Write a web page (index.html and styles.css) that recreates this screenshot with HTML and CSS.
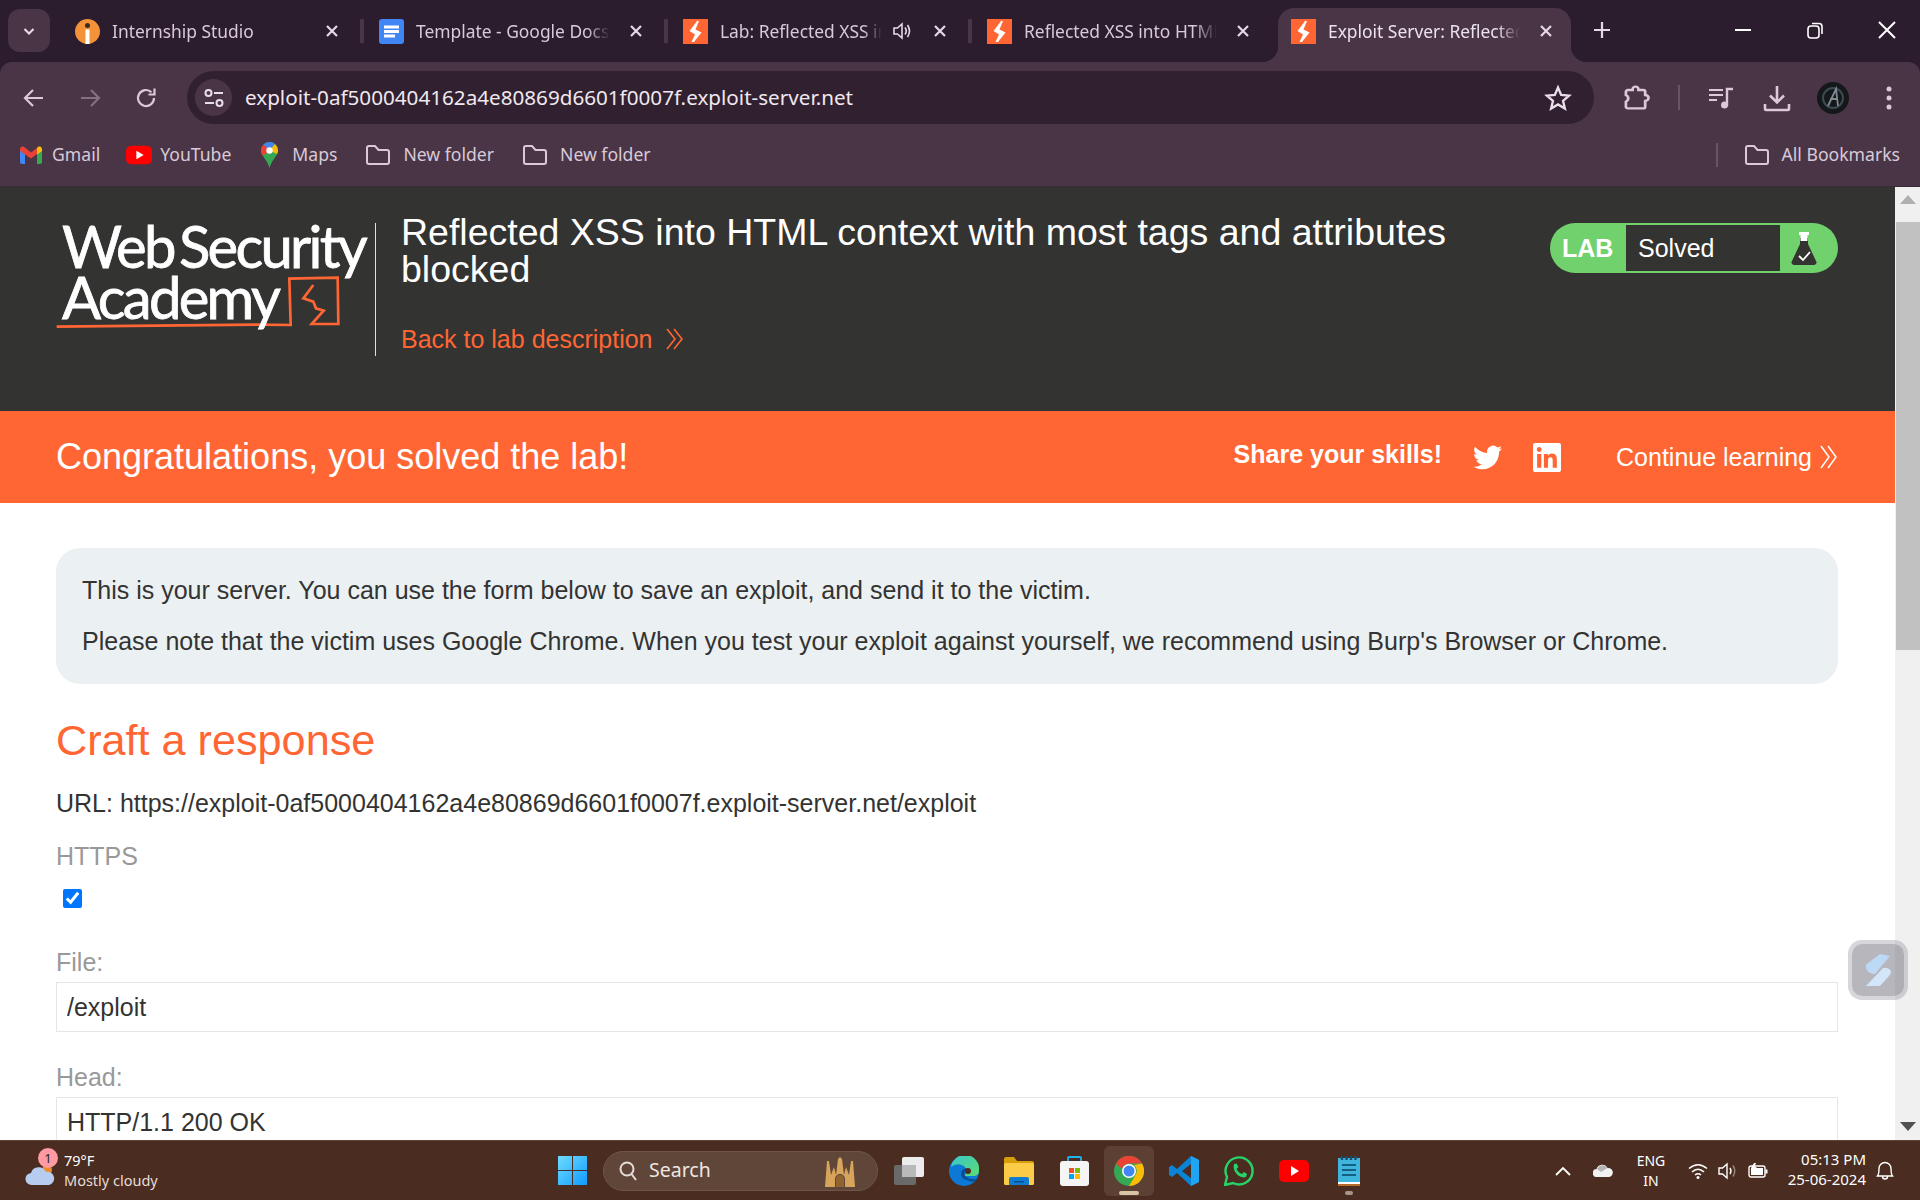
FILE: index.html
```html
<!DOCTYPE html>
<html lang="en">
<head>
    <meta charset="UTF-8">
    <meta name="viewport" content="width=device-width, initial-scale=1.0">
    <title>Exploit Server: Reflected XSS into HTML context with most tags and attributes blocked</title>
    <link rel="stylesheet" href="styles.css">
</head>
<body>
    <svg class="defs" width="0" height="0">
        <symbol id="burp" viewBox="0 0 25 25">
            <rect width="25" height="25" fill="#ff6633"/>
            <path d="M14 2 L6.500 12 L12 15.500 L8.500 23 L11 23 L18.500 13.500 L12.500 10.500 L16 2 Z" fill="#fff"/>
        </symbol>
        <symbol id="folder" viewBox="0 0 26 22">
            <path d="M2 4 a2 2 0 0 1 2 -2 h6 l3.500 4 H22 a2 2 0 0 1 2 2 v10 a2 2 0 0 1 -2 2 H4 a2 2 0 0 1 -2 -2 Z" fill="none" stroke="#dcc8d8" stroke-width="2"/>
        </symbol>
        <symbol id="close" viewBox="0 0 16 16">
            <path d="M3 3 L13 13 M13 3 L3 13" stroke="#e6d8e4" stroke-width="2.200" fill="none"/>
        </symbol>
    </svg>

    <div class="window-top">
        <div class="tabstrip">
            <div class="tab-menu">
                <svg width="14" height="14" viewBox="0 0 14 14"><path d="M2.500 5 L7 9.500 L11.500 5" fill="none" stroke="#eadfe8" stroke-width="2"/></svg>
            </div>
            <div class="tab">
                <svg class="favicon" viewBox="0 0 25 25">
                    <circle cx="12.500" cy="12.500" r="12.500" fill="#f39237"/>
                    <rect x="10.500" y="10.500" width="4" height="14.500" fill="#fff"/>
                    <circle cx="12.500" cy="6.500" r="2.500" fill="#3a2a20"/>
                </svg>
                <span class="tab-title">Internship Studio</span>
                <svg class="tab-close"><use href="#close"/></svg>
                <span class="tab-sep"></span>
            </div>
            <div class="tab">
                <svg class="favicon" viewBox="0 0 25 25">
                    <rect width="25" height="25" rx="3" fill="#4285f4"/>
                    <path d="M5 6.500 H20 V9.500 H5 Z M5 11 H20 V14 H5 Z M5 15.500 H16 V18.500 H5 Z" fill="#fff"/>
                </svg>
                <span class="tab-title">Template - Google Docs</span>
                <svg class="tab-close"><use href="#close"/></svg>
                <span class="tab-sep"></span>
            </div>
            <div class="tab">
                <svg class="favicon"><use href="#burp"/></svg>
                <span class="tab-title">Lab: Reflected XSS into HTML</span>
                <svg class="tab-sound" viewBox="0 0 20 20">
                    <path d="M2 7 H5.500 L10 3 V17 L5.500 13 H2 Z" fill="none" stroke="#e6d8e4" stroke-width="1.600"/>
                    <path d="M13 6.500 Q15.500 10 13 13.500 M15.500 4 Q19.500 10 15.500 16" fill="none" stroke="#e6d8e4" stroke-width="1.600"/>
                </svg>
                <svg class="tab-close"><use href="#close"/></svg>
                <span class="tab-sep"></span>
            </div>
            <div class="tab last-plain-tab">
                <svg class="favicon"><use href="#burp"/></svg>
                <span class="tab-title">Reflected XSS into HTML context</span>
                <svg class="tab-close"><use href="#close"/></svg>
            </div>
            <div class="tab active-tab">
                <svg class="favicon"><use href="#burp"/></svg>
                <span class="tab-title">Exploit Server: Reflected XSS</span>
                <svg class="tab-close"><use href="#close"/></svg>
            </div>
            <svg class="new-tab" viewBox="0 0 18 18"><path d="M9 1 V17 M1 9 H17" stroke="#e6d8e4" stroke-width="2.200"/></svg>
            <div class="window-controls">
                <svg class="win-btn" viewBox="0 0 20 20"><path d="M2 10 H18" stroke="#fff" stroke-width="2"/></svg>
                <svg class="win-btn" viewBox="0 0 20 20"><rect x="3" y="6" width="11" height="12" rx="3" fill="none" stroke="#fff" stroke-width="1.600"/><path d="M7 3.500 H14 a3 3 0 0 1 3 3 V14" fill="none" stroke="#fff" stroke-width="1.600"/></svg>
                <svg class="win-btn" viewBox="0 0 20 20"><path d="M2 2 L18 18 M18 2 L2 18" stroke="#fff" stroke-width="2"/></svg>
            </div>
        </div>

        <div class="toolbar">
            <div class="tool-btn">
                <svg width="24" height="24" viewBox="0 0 24 24"><path d="M21 12 H4 M11 4 L3 12 L11 20" fill="none" stroke="#dcc8d8" stroke-width="2.200"/></svg>
            </div>
            <div class="tool-btn">
                <svg width="24" height="24" viewBox="0 0 24 24"><path d="M3 12 H20 M13 4 L21 12 L13 20" fill="none" stroke="#85707f" stroke-width="2.200"/></svg>
            </div>
            <div class="tool-btn">
                <svg width="24" height="24" viewBox="0 0 24 24"><path d="M20 12 A8 8 0 1 1 17.500 6.200" fill="none" stroke="#dcc8d8" stroke-width="2.200"/><path d="M20.500 2.500 V8.500 H14.500" fill="none" stroke="#dcc8d8" stroke-width="2.200"/></svg>
            </div>
            <div class="omnibox">
                <div class="site-info">
                    <svg width="22" height="22" viewBox="0 0 22 22">
                        <circle cx="5.500" cy="6" r="3" fill="none" stroke="#eadfe8" stroke-width="2"/>
                        <path d="M11 6 H20 M2 16 H11" stroke="#eadfe8" stroke-width="2"/>
                        <circle cx="16.500" cy="16" r="3" fill="none" stroke="#eadfe8" stroke-width="2"/>
                    </svg>
                </div>
                <span class="url">exploit-0af5000404162a4e80869d6601f0007f.exploit-server.net</span>
                <svg class="star" width="28" height="28" viewBox="0 0 24 24"><path d="M12 3 L14.700 9.300 L21.500 9.900 L16.300 14.400 L17.900 21 L12 17.500 L6.100 21 L7.700 14.400 L2.500 9.900 L9.300 9.300 Z" fill="none" stroke="#eadfe8" stroke-width="2"/></svg>
            </div>
            <div class="tool-btn">
                <svg width="27" height="25" viewBox="0 0 28 30" preserveAspectRatio="none"><path d="M5 6 H10 V5 a3 3 0 0 1 6 0 V6 H21 a2 2 0 0 1 2 2 V12 a3.500 3.500 0 0 1 0 7 V26 a2 2 0 0 1 -2 2 H5 a2 2 0 0 1 -2 -2 V20 a4.500 4.500 0 0 0 0 -8 V8 a2 2 0 0 1 2 -2 Z" fill="none" stroke="#dcc8d8" stroke-width="2.800"/></svg>
            </div>
            <span class="tool-sep"></span>
            <div class="tool-btn">
                <svg width="26" height="24" viewBox="0 0 26 24"><path d="M1 4 H15 M1 9 H15 M1 14 H9" stroke="#dcc8d8" stroke-width="2.200"/><path d="M19 20 V3 H25" fill="none" stroke="#dcc8d8" stroke-width="2.400"/><circle cx="16.500" cy="19" r="3.500" fill="#dcc8d8"/></svg>
            </div>
            <div class="tool-btn">
                <svg width="28" height="28" viewBox="0 0 28 28"><path d="M14 2 V18 M7 11.500 L14 18.500 L21 11.500 M2 20 V25 a1 1 0 0 0 1 1 H25 a1 1 0 0 0 1 -1 V20" fill="none" stroke="#dcc8d8" stroke-width="2.600"/></svg>
            </div>
            <div class="tool-btn">
                <svg width="32" height="32" viewBox="0 0 32 32">
                    <circle cx="16" cy="16" r="16" fill="#15181a"/>
                    <circle cx="16" cy="16" r="10" fill="none" stroke="#3c4a52" stroke-width="2"/>
                    <path d="M11 24 L19 7 L21 24 M13 17 H21" fill="none" stroke="#7d8a94" stroke-width="1.800"/>
                </svg>
            </div>
            <div class="tool-btn">
                <svg width="8" height="28" viewBox="0 0 8 28"><circle cx="4" cy="5" r="2.500" fill="#dcc8d8"/><circle cx="4" cy="14" r="2.500" fill="#dcc8d8"/><circle cx="4" cy="23" r="2.500" fill="#dcc8d8"/></svg>
            </div>
        </div>

        <div class="bookmarks">
            <div class="bookmark">
                <svg class="bm-icon gmail-icon" viewBox="0 0 22 18">
                    <path d="M0 5 H5 V18 H2 a2 2 0 0 1 -2 -2 Z" fill="#4285f4"/>
                    <path d="M17 5 H22 V16 a2 2 0 0 1 -2 2 H17 Z" fill="#34a853"/>
                    <path d="M0 3.500 Q0 0 3.500 .5 L11 6.500 L17 2 V8 L11 12.500 L0 5 Z" fill="#ea4335"/>
                    <path d="M17 2 L18.500 .5 Q22 0 22 3.500 V5 L17 8.500 Z" fill="#fbbc04"/>
                </svg>
                <span>Gmail</span>
            </div>
            <div class="bookmark youtube-mark">
                <svg class="bm-icon" viewBox="0 0 25 18">
                    <rect width="25" height="18" rx="5" fill="#f00"/>
                    <path d="M10 5 L17 9 L10 13 Z" fill="#fff"/>
                </svg>
                <span>YouTube</span>
            </div>
            <div class="bookmark">
                <svg class="bm-icon maps-icon" viewBox="0 0 17 26">
                    <path d="M8.500 0 A8.500 8.500 0 0 1 17 8.500 C17 14 11 17 8.500 26 C6 17 0 14 0 8.500 A8.500 8.500 0 0 1 8.500 0 Z" fill="#34a853"/>
                    <path d="M2.500 2.500 A8.500 8.500 0 0 1 14 2 L8.500 8.500 Z" fill="#4285f4"/>
                    <path d="M0 8.500 A8.500 8.500 0 0 1 2.500 2.500 L8.500 8.500 L2 14 Q0 11 0 8.500 Z" fill="#ea4335"/>
                    <path d="M14 2 A8.500 8.500 0 0 1 17 8.500 Q17 10 16 12 L8.500 8.500 Z" fill="#fbbc04"/>
                    <circle cx="8.500" cy="8.500" r="3.200" fill="#fff"/>
                </svg>
                <span>Maps</span>
            </div>
            <div class="bookmark folder-mark">
                <svg class="bm-icon"><use href="#folder"/></svg>
                <span>New folder</span>
            </div>
            <div class="bookmark folder-mark">
                <svg class="bm-icon"><use href="#folder"/></svg>
                <span>New folder</span>
            </div>
            <span class="bm-sep"></span>
            <div class="bookmark folder-mark all-marks">
                <svg class="bm-icon"><use href="#folder"/></svg>
                <span>All Bookmarks</span>
            </div>
        </div>
    </div>

    <div class="viewport">
        <div class="page">
            <header class="lab-header">
                <div class="logo">
                    <svg class="logo-mark" viewBox="0 0 1200 510">
                        <path d="M50 380 L650 374 L752 375 L748 236 L893 233 L895 372 L815 372 L851 332 L828 325 L820 305 L790 295 L820 255" fill="none" stroke="#ff6633" stroke-width="8"/>
                    </svg>
                    <div class="logo-text">Web Security<br>Academy</div>
                </div>
                <div class="lab-title">
                    <h2>Reflected XSS into HTML context with most tags and attributes blocked</h2>
                    <a class="back-link" href="#">Back to lab description
                        <svg width="18" height="22" viewBox="0 0 18 22"><path d="M1 1 L9 11 L1 21 M8 1 L16 11 L8 21" fill="none" stroke="#ff6633" stroke-width="1.600"/></svg>
                    </a>
                </div>
                <div class="lab-status">
                    <span class="lab-label">LAB</span>
                    <span class="lab-state">Solved</span>
                    <svg class="flask" width="26" height="33" viewBox="0 0 26 33">
                        <path d="M9 6 H17 V12 L25 29 a2.500 2.500 0 0 1 -2 4 H3 a2.500 2.500 0 0 1 -2 -4 L9 12 Z" fill="#333332"/>
                        <path d="M8 0 H18 V3 H16.500 V9 H9.500 V3 H8 Z" fill="#fff"/>
                        <path d="M8 24 L12 28 L19 20" fill="none" stroke="#fff" stroke-width="1.800"/>
                    </svg>
                </div>
            </header>

            <div class="solved-bar">
                <span class="congrats">Congratulations, you solved the lab!</span>
                <span class="share">Share your skills!</span>
                <svg class="twitter" viewBox="0 0 24 24"><path fill="#fff" d="M23.953 4.570a10 10 0 01-2.825.775 4.958 4.958 0 002.163-2.723c-.951.555-2.005.959-3.127 1.184a4.920 4.920 0 00-8.384 4.482C7.690 8.095 4.067 6.130 1.640 3.162a4.822 4.822 0 00-.666 2.475c0 1.710.870 3.213 2.188 4.096a4.904 4.904 0 01-2.228-.616v.060a4.923 4.923 0 003.946 4.827 4.996 4.996 0 01-2.212.085 4.936 4.936 0 004.604 3.417 9.867 9.867 0 01-6.102 2.105c-.390 0-.779-.023-1.170-.067a13.995 13.995 0 007.557 2.209c9.053 0 13.998-7.496 13.998-13.985 0-.210 0-.420-.015-.630A9.935 9.935 0 0024 4.590z"/></svg>
                <svg class="linkedin" viewBox="0 0 24 24" preserveAspectRatio="none"><path fill="#fff" d="M20.447 20.452h-3.554v-5.569c0-1.328-.027-3.037-1.852-3.037-1.853 0-2.136 1.445-2.136 2.939v5.667H9.351V9h3.414v1.561h.046c.477-.9 1.637-1.850 3.370-1.850 3.601 0 4.267 2.370 4.267 5.455v6.286zM5.337 7.433c-1.144 0-2.063-.926-2.063-2.065 0-1.138.920-2.063 2.063-2.063 1.140 0 2.064.925 2.064 2.063 0 1.139-.925 2.065-2.064 2.065zm1.782 13.019H3.555V9h3.564v11.452zM22.225 0H1.771C.792 0 0 .774 0 1.729v20.542C0 23.227.792 24 1.771 24h20.451C23.200 24 24 23.227 24 22.271V1.729C24 .774 23.200 0 22.222 0h.003z"/></svg>
                <a class="continue" href="#">Continue learning
                    <svg width="18" height="24" viewBox="0 0 18 24"><path d="M1 1 L9 12 L1 23 M8 1 L16 12 L8 23" fill="none" stroke="#fff" stroke-width="1.500"/></svg>
                </a>
            </div>

            <section class="content">
                <div class="info-box">
                    <p>This is your server. You can use the form below to save an exploit, and send it to the victim.</p>
                    <p>Please note that the victim uses Google Chrome. When you test your exploit against yourself, we recommend using Burp's Browser or Chrome.</p>
                </div>
                <h3>Craft a response</h3>
                <p class="exploit-url">URL: https://exploit-0af5000404162a4e80869d6601f0007f.exploit-server.net/exploit</p>
                <label class="field-label https-label">HTTPS</label>
                <input class="https-check" type="checkbox" checked>
                <label class="field-label file-label">File:</label>
                <input class="text-input" type="text" value="/exploit">
                <label class="field-label head-label">Head:</label>
                <textarea class="text-input head-input" rows="5">HTTP/1.1 200 OK</textarea>
            </section>

            <div class="float-widget">
                <svg width="32" height="40" viewBox="14 9 32 40">
                    <path d="M18 27 Q17 24 20 22 L32 13 L42 15 L27 33 Q20 33 18 27 Z" fill="#bcd9f6"/>
                    <path d="M18 45 L35 27 Q40 26 43 30 Q43 33 41 35 L32 45 Z" fill="#d3e5f8"/>
                </svg>
            </div>
        </div>

        <div class="scrollbar">
            <svg class="scroll-arrow" viewBox="0 0 16 9"><path d="M8 0 L16 9 H0 Z" fill="#b0b0b0"/></svg>
            <div class="scroll-thumb"></div>
            <svg class="scroll-arrow arrow-down" viewBox="0 0 16 9"><path d="M0 0 H16 L8 9 Z" fill="#505050"/></svg>
        </div>
    </div>

    <footer class="taskbar">
        <div class="weather">
            <div class="weather-icon">
                <svg width="30" height="22" viewBox="0 0 30 22">
                    <circle cx="22" cy="6" r="5" fill="#f08a2c"/>
                    <path d="M7 21 a6 6 0 0 1 -1 -12 a8 8 0 0 1 15 -1 a6.500 6.500 0 0 1 3 13 Z" fill="#b6cdf0"/>
                </svg>
                <span class="weather-badge">1</span>
            </div>
            <div class="weather-text">
                <span class="temp">79°F</span>
                <span class="sky">Mostly cloudy</span>
            </div>
        </div>

        <div class="task-center">
            <svg class="start" width="29" height="29" viewBox="0 0 29 29">
                <defs><linearGradient id="winblue" x1="0" y1="0" x2="1" y2="1"><stop offset="0" stop-color="#6fdcff"/><stop offset="1" stop-color="#0f9bff"/></linearGradient></defs>
                <path d="M0 0 H14 V14 H0 Z M15 0 H29 V14 H15 Z M0 15 H14 V29 H0 Z M15 15 H29 V29 H15 Z" fill="url(#winblue)"/>
            </svg>
            <div class="search-pill">
                <svg width="18" height="20" viewBox="0 0 18 20"><circle cx="8" cy="8" r="6.500" fill="none" stroke="#e6dcd6" stroke-width="2"/><path d="M12.500 13 L17 19" stroke="#e6dcd6" stroke-width="2"/></svg>
                <span>Search</span>
                <svg class="search-art" width="38" height="32" viewBox="0 0 38 32">
                    <path d="M4 32 L6 6 L8 6 L10 20 L13 12 L15 20 L17 4 L19 2 L21 4 L23 20 L25 12 L28 20 L30 6 L32 6 L34 32 H24 V24 A5 5 0 0 0 14 24 V32 Z" fill="#d6a55b"/>
                    <path d="M15 32 V24 A4 4 0 0 1 23 24 V32 Z" fill="#8f6430"/>
                </svg>
            </div>
            <div class="task-item">
                <svg width="30" height="28" viewBox="0 0 30 28">
                    <rect x="0" y="8" width="22" height="20" rx="2" fill="#6a6a6a"/>
                    <rect x="8" y="0" width="22" height="20" rx="2" fill="#ececec"/>
                    <rect x="8" y="8" width="14" height="12" fill="#b9b9b9"/>
                </svg>
            </div>
            <div class="task-item">
                <svg width="30" height="30" viewBox="0 0 30 30">
                    <defs><linearGradient id="edgeg" x1="0" y1="0" x2="1" y2="1"><stop offset="0" stop-color="#37c6d0"/><stop offset="1" stop-color="#5fdc6e"/></linearGradient></defs>
                    <circle cx="15" cy="15" r="15" fill="#0d79d6"/>
                    <path d="M2 11 A14 14 0 0 1 30 15 Q30 20 24 20 H15 Q20 15 15 10 Q8 6 2 11 Z" fill="url(#edgeg)"/>
                    <path d="M18 12 A6 6 0 1 0 18 24 Q24 28 28 23 Q20 24 16 20 Q14 16 18 12 Z" fill="#0a4e96"/>
                    <circle cx="19" cy="15" r="3" fill="#4a2c20"/>
                </svg>
            </div>
            <div class="task-item">
                <svg width="30" height="28" viewBox="0 0 30 28">
                    <path d="M0 2 a2 2 0 0 1 2 -2 H10 L13 4 H28 a2 2 0 0 1 2 2 V10 H0 Z" fill="#d79e0a"/>
                    <rect x="0" y="6" width="30" height="22" rx="1.500" fill="#fccc48"/>
                    <path d="M5 28 V22 a2 2 0 0 1 2 -2 H23 a2 2 0 0 1 2 2 V28 Z" fill="#0f7cd0"/>
                    <rect x="10" y="24" width="10" height="1.500" fill="#0a4e96"/>
                </svg>
            </div>
            <div class="task-item">
                <svg width="29" height="30" viewBox="0 0 29 30">
                    <path d="M8 7 V2 a1 1 0 0 1 1 -1 H20 a1 1 0 0 1 1 1 V7" fill="none" stroke="#22b3ee" stroke-width="1.800"/>
                    <rect x="0" y="5" width="29" height="25" rx="3" fill="#f5f5f5"/>
                    <rect x="9" y="12" width="5" height="5" fill="#f25022"/>
                    <rect x="15" y="12" width="5" height="5" fill="#7fba00"/>
                    <rect x="9" y="18" width="5" height="5" fill="#00a4ef"/>
                    <rect x="15" y="18" width="5" height="5" fill="#ffb900"/>
                </svg>
            </div>
            <div class="task-item task-active">
                <svg width="30" height="30" viewBox="0 0 30 30">
                    <circle cx="15" cy="15" r="15" fill="#34a853"/>
                    <path d="M2 7.500 A15 15 0 0 1 28 7.500 H15 A7.500 7.500 0 0 0 8 13 Z" fill="#ea4335"/>
                    <path d="M28 7.500 A15 15 0 0 1 15 30 L21.500 19 A7.500 7.500 0 0 0 20 9 Z" fill="#fbbc04"/>
                    <circle cx="15" cy="15" r="7" fill="#fff"/>
                    <circle cx="15" cy="15" r="5.500" fill="#4285f4"/>
                </svg>
                <span class="active-line"></span>
            </div>
            <div class="task-item">
                <svg width="30" height="30" viewBox="0 0 30 30">
                    <path d="M22 0 L30 4 V26 L22 30 L8 17 L3 21 L0 19 V11 L3 9 L8 13 Z M22 8 L13 15 L22 22 Z" fill="#0a84d6"/>
                    <path d="M22 0 L30 4 V26 L22 30 Z" fill="#22a5f1"/>
                </svg>
            </div>
            <div class="task-item">
                <svg width="30" height="30" viewBox="0 0 30 30">
                    <path d="M1 29 L3 21 A13.500 13.500 0 1 1 9 27 Z" fill="none" stroke="#25d366" stroke-width="2.400"/>
                    <path d="M10 8 L12.500 7.500 L14.500 11 L12.500 13 Q14.500 17 18 18 L20 16 L23 18 L22 21 Q18 22.500 13.500 19 Q8.500 14 10 8 Z" fill="#25d366"/>
                </svg>
            </div>
            <div class="task-item">
                <svg width="30" height="22" viewBox="0 0 30 22"><rect width="30" height="22" rx="5" fill="#f00"/><path d="M12 6 L20 11 L12 16 Z" fill="#fff"/></svg>
            </div>
            <div class="task-item">
                <svg width="22" height="30" viewBox="0 0 22 30">
                    <rect x="0" y="2" width="22" height="26" fill="#3fb4dc"/>
                    <rect x="0" y="26" width="22" height="2" fill="#fff"/>
                    <rect x="0" y="28" width="22" height="2" fill="#b86a2c"/>
                    <path d="M4 0 V4 M8.500 0 V4 M13 0 V4 M17.500 0 V4" stroke="#14506e" stroke-width="2.400"/>
                    <path d="M4 9 H18 M4 14 H18 M4 19 H18" stroke="#14607f" stroke-width="2.200"/>
                </svg>
                <span class="open-dot"></span>
            </div>
        </div>

        <div class="tray">
            <svg class="tray-chevron" width="20" height="12" viewBox="0 0 20 12"><path d="M3 10 L10 3 L17 10" fill="none" stroke="#fff" stroke-width="1.800"/></svg>
            <svg class="tray-cloud" width="20" height="13" viewBox="0 0 20 13"><path d="M4 13 a4 4 0 0 1 -.5 -8 a6 6 0 0 1 11 -1 a4.500 4.500 0 0 1 1.500 9 Z" fill="#f2f2f2"/><path d="M4 5 a6 6 0 0 1 10.500 -1 L8 8 Z" fill="#b5b5b5"/></svg>
            <div class="tray-lang"><span>ENG</span><span>IN</span></div>
            <svg class="tray-wifi" width="20" height="16" viewBox="0 0 20 16"><path d="M1 5.500 Q10 -2 19 5.500 M4 9 Q10 3.500 16 9 M7 12 Q10 9.500 13 12" fill="none" stroke="#fff" stroke-width="1.600"/><circle cx="10" cy="14.500" r="1.500" fill="#fff"/></svg>
            <svg class="tray-icon" width="20" height="18" viewBox="0 0 20 18"><path d="M1 6 H4.500 L9 2 V16 L4.500 12 H1 Z" fill="none" stroke="#fff" stroke-width="1.400"/><path d="M12 6 Q14 9 12 12" fill="none" stroke="#fff" stroke-width="1.400"/><path d="M15 3.500 Q18.500 9 15 14.500" fill="none" stroke="#9c8a80" stroke-width="1.400"/></svg>
            <svg class="tray-icon" width="20" height="16" viewBox="0 0 20 16"><rect x="1" y="3" width="16" height="11" rx="2" fill="none" stroke="#fff" stroke-width="1.400"/><rect x="3" y="5" width="12" height="7" fill="#fff"/><rect x="17.500" y="6.500" width="2" height="4" fill="#fff"/><path d="M6 0 L3 5 H6 L4 8 L9 4 H6.500 L8 0 Z" fill="#fff"/></svg>
            <div class="tray-clock"><span>05:13 PM</span><span>25-06-2024</span></div>
            <svg class="tray-bell" width="18" height="20" viewBox="0 0 18 20"><path d="M1.500 15 Q3 13 3 7.500 a6 6 0 0 1 12 0 Q15 13 16.500 15 Z M6.500 15.500 a2.500 2.500 0 0 0 5 0" fill="none" stroke="#fff" stroke-width="1.400"/></svg>
        </div>
    </footer>
</body>
</html>
```

FILE: styles.css
```css
* {
    box-sizing: border-box;
}

body {
    margin: 0;
    height: 100vh;
    display: flex;
    flex-direction: column;
    overflow: hidden;
    font-family: "Liberation Sans", Arial, sans-serif;
    color: #333332;
    background-color: white;
}

.defs {
    position: absolute;
}

/* browser chrome */
.window-top {
    background-color: #2c1d2e;
    font-family: "Noto Sans", sans-serif;
    flex: none;
}

.tabstrip {
    height: 62px;
    display: flex;
    align-items: flex-start;
    padding-left: 8px;
}

.tab-menu {
    width: 42px;
    height: 43px;
    margin: 9px 12px 0 0;
    background-color: #4a3547;
    border-radius: 12px;
    display: flex;
    align-items: center;
    justify-content: center;
}

.tab {
    width: 304px;
    height: 62px;
    display: flex;
    align-items: center;
    padding: 0 2px 0 13px;
    color: #d9cad8;
    font-size: 17.400px;
}

.favicon {
    width: 25px;
    height: 25px;
    flex: none;
}

.tab-title {
    flex: 1;
    min-width: 0;
    margin: 0 18px 1px 12px;
    white-space: nowrap;
    overflow: hidden;
    -webkit-mask-image: linear-gradient(to right, black 88%, transparent 100%);
    mask-image: linear-gradient(to right, black 88%, transparent 100%);
}

.tab-close {
    width: 16px;
    height: 16px;
    flex: none;
}

.tab-sound {
    width: 20px;
    height: 20px;
    flex: none;
    margin: 0 20px 0 -8px;
}

.tab-sep {
    width: 4px;
    height: 24px;
    margin-left: 20px;
    background-color: #4a3547;
    flex: none;
}

.last-plain-tab {
    padding-right: 27px;
}

.active-tab {
    position: relative;
    width: 293px;
    height: 54px;
    margin-top: 8px;
    padding: 0 17px 8px 13px;
    background-color: #4a3547;
    border-radius: 16px 16px 0 0;
    color: #ece2ea;
}

.active-tab::before,
.active-tab::after {
    content: "";
    position: absolute;
    bottom: 0;
    width: 16px;
    height: 16px;
}

.active-tab::before {
    right: 100%;
    background: radial-gradient(circle at 0 0, #2c1d2e 16px, #4a3547 16.500px);
}

.active-tab::after {
    left: 100%;
    background: radial-gradient(circle at 100% 0, #2c1d2e 16px, #4a3547 16.500px);
}

.new-tab {
    width: 18px;
    height: 18px;
    margin: 21px 0 0 22px;
}

.window-controls {
    margin-left: auto;
    padding: 20px 23px 0 0;
    display: flex;
    gap: 52px;
}

.win-btn {
    width: 20px;
    height: 20px;
}

.toolbar {
    height: 62px;
    padding: 9px 3px 0 6px;
    background-color: #4a3547;
    border-radius: 12px 12px 0 0;
    display: flex;
    align-items: center;
}

.tool-btn {
    width: 56px;
    height: 53px;
    flex: none;
    display: flex;
    align-items: center;
    justify-content: center;
}

.omnibox {
    width: 1407px;
    height: 53px;
    margin: 0 14px 0 13px;
    background-color: #302030;
    border-radius: 27px;
    display: flex;
    align-items: center;
    padding: 0 22px 0 8px;
}

.site-info {
    width: 37px;
    height: 37px;
    border-radius: 50%;
    background-color: #4a3547;
    display: flex;
    align-items: center;
    justify-content: center;
}

.url {
    margin: 0 0 2px 13px;
    color: #f0e8ee;
    font-size: 20.650px;
}

.star {
    margin-left: auto;
}

.tool-sep {
    width: 2px;
    height: 25px;
    margin: 0 13px 0 14px;
    background-color: #6a5365;
    flex: none;
}

.bookmarks {
    height: 63px;
    padding: 0 20px;
    background-color: #4a3547;
    border-bottom: 1px solid #3a2a38;
    display: flex;
    align-items: center;
    gap: 26px;
    color: #d9cad8;
    font-size: 17.600px;
}

.bookmark {
    display: flex;
    align-items: center;
    gap: 10px;
}

.bookmark span {
    margin-bottom: 2px;
}

.youtube-mark {
    gap: 8px;
}

.folder-mark {
    gap: 12px;
    margin-left: 2px;
}

.all-marks {
    margin-left: 0;
}

.bm-icon {
    width: 26px;
    height: 22px;
    flex: none;
}

.gmail-icon {
    width: 22px;
    height: 18px;
}

.maps-icon {
    width: 17px;
    height: 26px;
    margin: 0 4px;
}

.bm-sep {
    width: 2px;
    height: 24px;
    margin-left: auto;
    background-color: #6a5365;
}

/* lab page */
.viewport {
    flex: 1;
    min-height: 0;
    display: flex;
}

.page {
    position: relative;
    flex: 1;
    min-width: 0;
}

.lab-header {
    height: 224px;
    padding: 27px 57px 0 57px;
    background-color: #333332;
    display: flex;
    align-items: flex-start;
    color: white;
}

.logo {
    position: relative;
    width: 319px;
    height: 133px;
    margin-top: 9px;
    border-right: 1px solid #e0e0e0;
    flex: none;
}

.logo-mark {
    position: absolute;
    left: -17px;
    top: -23px;
    width: 400px;
    height: 170px;
}

.logo-text {
    position: relative;
    margin-left: 5px;
    margin-top: -3px;
    font-family: Lato, sans-serif;
    font-size: 58px;
    line-height: 51px;
    letter-spacing: -2.700px;
    word-spacing: -7px;
    white-space: nowrap;
    -webkit-text-stroke: 0.8px white;
}

.lab-title {
    width: 1080px;
    padding-left: 25px;
    flex: none;
}

.lab-title h2 {
    margin: 0;
    font-size: 37.500px;
    font-weight: normal;
    line-height: 37px;
}

.back-link {
    margin-top: 37px;
    display: flex;
    align-items: center;
    gap: 13px;
    color: #ff6633;
    font-size: 25px;
    line-height: 28px;
    text-decoration: none;
}

.lab-status {
    margin: 9px 0 0 auto;
    width: 288px;
    height: 50px;
    padding: 2px 0;
    background-color: #70d16d;
    border-radius: 25px;
    display: flex;
    align-items: center;
    flex: none;
}

.lab-label {
    width: 76px;
    padding-left: 12px;
    font-size: 25px;
    font-weight: bold;
}

.lab-state {
    width: 154px;
    height: 100%;
    padding-left: 12px;
    background-color: #333332;
    font-size: 25px;
    display: flex;
    align-items: center;
}

.flask {
    margin-left: 11px;
}

.solved-bar {
    height: 92px;
    padding: 0 57px 0 56px;
    background-color: #ff6633;
    color: white;
    display: flex;
    align-items: center;
}

.congrats {
    font-size: 36px;
}

.share {
    margin: -6px 0 0 auto;
    font-size: 25px;
    font-weight: bold;
}

.twitter {
    width: 29px;
    height: 29px;
    margin-left: 31px;
}

.linkedin {
    width: 28px;
    height: 29px;
    margin-left: 31px;
}

.continue {
    margin-left: 55px;
    display: flex;
    align-items: center;
    gap: 8px;
    color: white;
    font-size: 25px;
    text-decoration: none;
}

.content {
    padding: 45px 57px 0 56px;
    font-size: 25px;
    line-height: 28px;
    display: flex;
    flex-direction: column;
    align-items: flex-start;
}

.info-box {
    width: 100%;
    height: 136px;
    padding: 28px 26px;
    background-color: #ebf0f2;
    border-radius: 24px;
}

.info-box p {
    margin: 0 0 23px;
}

.content h3 {
    margin: 31px 0 0;
    color: #ff6633;
    font-size: 43.200px;
    font-weight: normal;
    line-height: 50px;
}

.exploit-url {
    margin: 24px 0 0;
}

.field-label {
    margin: 40px 0 0;
    color: #999;
}

.https-label {
    margin-top: 25px;
}

.https-check {
    width: 19px;
    height: 19px;
    margin: 19px 0 0 7px;
}

.head-label {
    margin-top: 31px;
}

.text-input {
    width: 100%;
    height: 50px;
    margin-top: 6px;
    padding: 0 10px;
    border: 1px solid #e6e6e6;
    color: #333332;
    font-family: inherit;
    font-size: 25px;
    background-color: white;
}

.head-input {
    height: 100px;
    padding-top: 10px;
    line-height: 28px;
    resize: none;
    overflow: hidden;
    flex: none;
}

.float-widget {
    position: absolute;
    right: -13px;
    top: 753px;
    width: 60px;
    height: 60px;
    background-color: rgba(95, 95, 108, 0.46);
    border: 4px solid rgba(140, 140, 155, 0.36);
    background-clip: padding-box;
    border-radius: 14px;
    display: flex;
    align-items: center;
    justify-content: center;
}

.scrollbar {
    width: 25px;
    flex: none;
    background-color: #f0f0f0;
    display: flex;
    flex-direction: column;
    align-items: center;
    position: relative;
    z-index: -1;
}

.scroll-arrow {
    width: 16px;
    height: 9px;
    margin-top: 8px;
    flex: none;
}

.scroll-thumb {
    width: 24px;
    height: 428px;
    margin: 18px 0 0 1px;
    background-color: #c1c1c1;
}

.arrow-down {
    margin: auto 0 9px;
}

/* windows taskbar */
.taskbar {
    position: relative;
    height: 60px;
    flex: none;
    background-color: #4a2c20;
    border-top: 1px solid #5e4338;
    display: flex;
    align-items: center;
    font-family: "Noto Sans", sans-serif;
    color: white;
}

.weather {
    width: 558px;
    padding-left: 25px;
    display: flex;
    flex: none;
}

.weather-icon {
    position: relative;
    width: 39px;
    padding-top: 14px;
}

.weather-badge {
    position: absolute;
    left: 13px;
    top: -2px;
    width: 20px;
    height: 20px;
    border-radius: 50%;
    background-color: #ff9aa2;
    color: #2c1d1d;
    font-size: 13px;
    line-height: 20px;
    text-align: center;
}

.weather-text {
    margin-bottom: 2px;
    display: flex;
    flex-direction: column;
    font-size: 14.500px;
    line-height: 20px;
}

.sky {
    color: #e6dcd6;
}

.task-center {
    display: flex;
    align-items: center;
    gap: 5px;
}

.start {
    margin-right: 11px;
}

.search-pill {
    width: 275px;
    height: 40px;
    margin-right: 1px;
    padding: 0 18px 0 15px;
    background-color: #604539;
    border: 1px solid #6f5548;
    border-radius: 20px;
    display: flex;
    align-items: center;
    gap: 12px;
    color: #eee6e0;
    font-size: 19.500px;
}

.search-pill span {
    margin-bottom: 2px;
}

.search-art {
    margin-left: auto;
}

.task-item {
    position: relative;
    width: 50px;
    height: 50px;
    border-radius: 6px;
    display: flex;
    align-items: center;
    justify-content: center;
}

.task-active {
    background-color: #5d4034;
}

.active-line {
    position: absolute;
    bottom: 1px;
    left: 15px;
    width: 20px;
    height: 4px;
    border-radius: 2px;
    background-color: #d9c4a8;
}

.open-dot {
    position: absolute;
    bottom: 1px;
    left: 21px;
    width: 8px;
    height: 4px;
    border-radius: 2px;
    background-color: #a8958a;
}

.tray {
    margin-left: auto;
    padding-right: 26px;
    display: flex;
    align-items: center;
    font-size: 14px;
    line-height: 20px;
}

.tray-cloud {
    margin-left: 20px;
}

.tray-lang {
    width: 30px;
    margin-left: 23px;
    display: flex;
    flex-direction: column;
    align-items: center;
}

.tray-wifi {
    margin-left: 22px;
}

.tray-icon {
    margin-left: 10px;
}

.tray-clock {
    width: 90px;
    margin: 0 0 3px 8px;
    display: flex;
    flex-direction: column;
    align-items: flex-end;
    font-size: 15px;
}

.tray-bell {
    margin-left: 10px;
}
```
